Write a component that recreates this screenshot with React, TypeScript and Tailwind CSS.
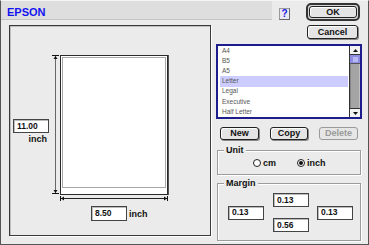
import React from 'react'

const sizes = ['A4', 'B5', 'A5', 'Letter', 'Legal', 'Executive', 'Half Letter']

function Btn({ label, w, disabled }: { label: string; w: string; disabled?: boolean }) {
  return (
    <div
      className={`${w} h-[13px] rounded-[3px] border flex items-center justify-center text-[9px] font-bold leading-none ${
        disabled
          ? 'border-[#9a9a9a] text-[#9a9a9a] bg-[#e6e6e6]'
          : 'border-[#222] text-[#111] bg-[#e4e4e4] shadow-[inset_1px_1px_0_#fff,1px_1px_0_#888]'
      }`}
    >
      {label}
    </div>
  )
}

function Field({ value, w = 'w-[36px]', h = 'h-[14px]' }: { value: string; w?: string; h?: string }) {
  return (
    <div
      className={`${w} ${h} bg-white border border-[#444] shadow-[inset_1px_1px_0_#bbb] flex items-center pl-[3px] text-[8.5px] font-bold leading-none text-[#111]`}
    >
      {value}
    </div>
  )
}

function Radio({ on }: { on?: boolean }) {
  return (
    <div className="w-[8px] h-[8px] rounded-full border border-[#222] bg-white flex items-center justify-center">
      {on && <div className="w-[4px] h-[4px] rounded-full bg-[#111]" />}
    </div>
  )
}

export default function App() {
  return (
    <div className="w-[369px] h-[245px] bg-[#ebebeb] border border-[#555] border-t-[#f4f4f4] overflow-hidden flex flex-col font-['Liberation_Sans',Arial,sans-serif] text-[#111]">
      {/* header */}
      <div className="h-[23px] flex items-start shrink-0">
        <div className="w-[271px] h-[19px] bg-[#dedede] border-b border-[#c4c4c4] pl-[6px] pt-[6px]">
          <span className="text-[11px] font-bold leading-[11px] text-[#1414f0] block">EPSON</span>
        </div>
        <div className="ml-[7px] mt-[7px] w-[11px] h-[12px] border border-[#999] border-r-[#666] border-b-[#666] bg-[#e8e8f4] flex items-center justify-center text-[10px] font-bold leading-none text-[#1a1ae0]">
          ?
        </div>
        <div className="ml-[16px] mt-[2px] w-[54px] h-[18px] rounded-[5px] border-2 border-[#333] bg-[#d8d8d8] p-[1px]">
          <div className="w-full h-full rounded-[3px] border border-[#222] bg-[#e4e4e4] shadow-[inset_1px_1px_0_#fff] flex items-center justify-center text-[9px] font-bold leading-none">
            OK
          </div>
        </div>
      </div>

      {/* body */}
      <div className="flex items-start">
        {/* preview panel */}
        <div className="ml-[8px] mt-[1px] w-[202px] h-[211px] border border-[#3a3a3a] shadow-[inset_1px_1px_0_#bdbdbd,1px_1px_0_#fff]">
          <div className="flex items-start pt-[29px]">
            <div className="ml-[3px] mt-[64px] flex flex-col items-end">
              <Field value="11.00" />
              <span className="mt-[2px] mr-[2px] text-[9px] font-bold leading-[9px]">inch</span>
            </div>
            <svg className="ml-[3px] shrink-0" width="7" height="140" viewBox="0 0 7 140">
              <line x1="3.5" y1="1" x2="3.5" y2="138" stroke="#666" />
              <line x1="0" y1="0.5" x2="7" y2="0.5" stroke="#111" />
              <path d="M1.5 4 L3.5 1 L5.5 4 Z" fill="#111" />
              <line x1="0" y1="138.5" x2="7" y2="138.5" stroke="#111" />
              <path d="M1.5 135 L3.5 138 L5.5 135 Z" fill="#111" />
            </svg>
            <div className="ml-[1px] flex flex-col">
              <div className="w-[108px] h-[140px] bg-white border border-[#2a2a2a] shadow-[1px_0_0_#555] pt-[1px] pl-[1px] pr-[1px] pb-[6px]">
                <div className="w-full h-full border border-[#a8a8a8]" />
              </div>
              <svg width="108" height="7" viewBox="0 0 108 7">
                <line x1="1" y1="3.5" x2="107" y2="3.5" stroke="#222" />
                <line x1="0.5" y1="1" x2="0.5" y2="6" stroke="#111" />
                <line x1="107.5" y1="1" x2="107.5" y2="6" stroke="#111" />
                <path d="M4 1.5 L1 3.5 L4 5.5 Z" fill="#111" />
                <path d="M104 1.5 L107 3.5 L104 5.5 Z" fill="#111" />
              </svg>
              <div className="mt-[4px] ml-[31px] flex items-end">
                <Field value="8.50" w="w-[36px]" h="h-[15px]" />
                <span className="ml-[2px] mb-[2px] text-[9px] font-bold leading-[9px]">inch</span>
              </div>
            </div>
          </div>
        </div>

        {/* right column */}
        <div className="ml-[5px] w-[146px] flex flex-col">
          <div className="ml-[91px] mt-[1px] w-[51px] h-[14px] rounded-[3px] border border-[#222] bg-[#e4e4e4] shadow-[inset_1px_1px_0_#fff,1px_1px_0_#888] flex items-center justify-center text-[9px] font-bold leading-none">
            Cancel
          </div>

          {/* list */}
          <div className="mt-[5px] h-[75px] border-2 border-[#1c1c8c] bg-white flex">
            <div className="flex-1 flex flex-col pt-[0px] pl-[2px] pr-[1px]">
              {sizes.map((s) => (
                <div
                  key={s}
                  className={`h-[10.15px] flex items-center pl-[2px] text-[6.5px] leading-none text-[#555] ${
                    s === 'Letter' ? 'bg-[#ccccff]' : ''
                  }`}
                >
                  {s}
                </div>
              ))}
            </div>
            <div className="w-[11px] border-l border-[#333] flex flex-col">
              <div className="h-[9px] bg-[#f2f2f2] border-b border-[#333] flex items-center justify-center">
                <svg width="5" height="3" viewBox="0 0 5 3">
                  <path d="M0 3 L2.5 0 L5 3 Z" fill="#111" />
                </svg>
              </div>
              <div className="h-[9px] bg-[#8c8ce0] border-b border-[#555] flex items-center justify-center">
                <div className="w-[5px] h-[5px] bg-[#b8b8f4]" />
              </div>
              <div className="flex-1 bg-[#a4a4a4] border-l border-[#888] border-r border-r-[#c0c0c0]" />
              <div className="h-[9px] bg-[#f2f2f2] border-t border-[#333] flex items-center justify-center">
                <svg width="5" height="3" viewBox="0 0 5 3">
                  <path d="M0 0 L2.5 3 L5 0 Z" fill="#111" />
                </svg>
              </div>
            </div>
          </div>

          {/* buttons */}
          <div className="mt-[8px] flex pl-[4px] gap-[11px]">
            <Btn label="New" w="w-[39px]" />
            <Btn label="Copy" w="w-[38px]" />
            <Btn label="Delete" w="w-[39px]" disabled />
          </div>

          {/* unit */}
          <div className="relative mt-[10px] ml-[1px] w-[144px] h-[25px] border border-[#9c9c9c] shadow-[inset_1px_1px_0_#fff,1px_1px_0_#fff] flex items-center">
            <span className="absolute left-[6px] top-[-6px] px-[2px] bg-[#ebebeb] text-[9px] font-bold leading-[10px]">
              Unit
            </span>
            <div className="ml-[35px] mt-[1px] flex items-center gap-[2px]">
              <Radio />
              <span className="text-[9px] font-bold leading-none">cm</span>
            </div>
            <div className="ml-[21px] mt-[1px] flex items-center gap-[2px]">
              <Radio on />
              <span className="text-[9px] font-bold leading-none">inch</span>
            </div>
          </div>

          {/* margin */}
          <div className="relative mt-[8px] ml-[1px] w-[144px] h-[58px] border border-[#9c9c9c] shadow-[inset_1px_1px_0_#fff,1px_1px_0_#fff] flex items-center pl-[10px] pt-[1px]">
            <span className="absolute left-[6px] top-[-6px] px-[2px] bg-[#ebebeb] text-[9px] font-bold leading-[10px]">
              Margin
            </span>
            <Field value="0.13" />
            <div className="ml-[9px] flex flex-col gap-[11px]">
              <Field value="0.13" />
              <Field value="0.56" />
            </div>
            <div className="ml-[8px]">
              <Field value="0.13" />
            </div>
          </div>
        </div>
      </div>
    </div>
  )
}
